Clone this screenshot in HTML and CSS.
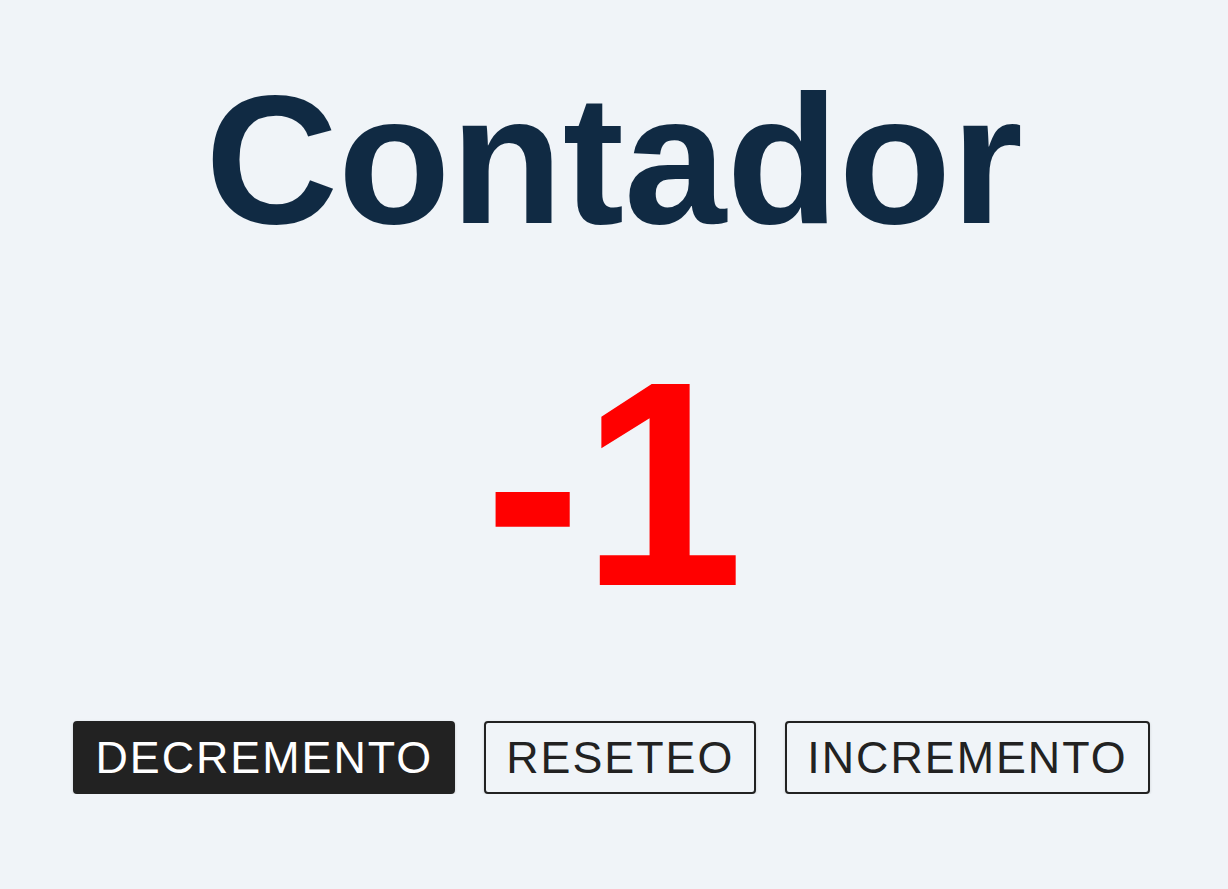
FILE: index.html
```html
<!DOCTYPE html>
<html lang="es">
<head>
<meta charset="utf-8">
<title>Contador</title>
<link rel="stylesheet" href="styles.css">
</head>
<body>
<main class="app">
  <h1 class="title">Contador</h1>
  <p class="count">-1</p>
  <div class="actions">
    <button class="btn btn-dark">DECREMENTO</button>
    <button class="btn">RESETEO</button>
    <button class="btn">INCREMENTO</button>
  </div>
</main>
</body>
</html>
```
FILE: styles.css
```css
html, body {
  margin: 0;
  padding: 0;
  background: #f0f4f8;
  font-family: "Liberation Sans", Arial, sans-serif;
}
.app {
  display: flex;
  flex-direction: column;
  align-items: center;
  padding-top: 53px;
}
.title {
  margin: 0;
  font-size: 184px;
  font-weight: 700;
  color: #102a43;
  line-height: normal;
}
.count {
  margin: 51px 0 0;
  font-size: 292px;
  font-weight: 700;
  color: #ff0000;
  line-height: normal;
}
.actions {
  display: flex;
  gap: 29px;
  margin-top: 69px;
  margin-right: 5px;
}
.btn {
  font-family: "Liberation Sans", Arial, sans-serif;
  font-size: 44.8px;
  letter-spacing: 2px;
  padding: 9px 20px;
  border: 2px solid #222222;
  border-radius: 4px;
  background: #f0f4f8;
  color: #222222;
  line-height: normal;
  box-shadow: 0 1px 3px rgba(0,0,0,0.15);
  cursor: pointer;
}
.btn-dark {
  background: #222222;
  color: #ffffff;
}
```
